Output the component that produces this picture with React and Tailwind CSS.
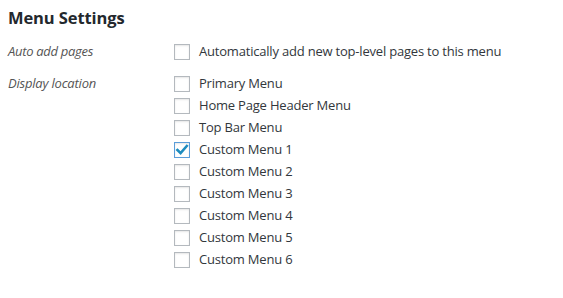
import React from "react";

const locations = [
  { name: "Primary Menu", checked: false },
  { name: "Home Page Header Menu", checked: false },
  { name: "Top Bar Menu", checked: false },
  { name: "Custom Menu 1", checked: true },
  { name: "Custom Menu 2", checked: false },
  { name: "Custom Menu 3", checked: false },
  { name: "Custom Menu 4", checked: false },
  { name: "Custom Menu 5", checked: false },
  { name: "Custom Menu 6", checked: false },
];

function Box({ checked }) {
  return (
    <span
      className={
        "w-4 h-4 shrink-0 border bg-white shadow-[inset_0_1px_2px_rgba(0,0,0,0.1)] flex items-center justify-center " +
        (checked ? "border-[#5b9dd9]" : "border-[#b4b9be]")
      }
    >
      {checked && (
        <svg width="14" height="14" viewBox="0 0 14 14">
          <path d="M2.4 7 L5.6 10.2 L11.8 3" fill="none" stroke="#1e8cbe" strokeWidth="2.6" strokeLinecap="square" />
        </svg>
      )}
    </span>
  );
}

function Option({ label, checked }) {
  return (
    <label className="h-[22px] flex items-center gap-[9px]">
      <Box checked={checked} />
      <span>{label}</span>
    </label>
  );
}

export default function App() {
  return (
    <div className="w-[563px] h-[298px] bg-white text-[#32373c] text-[13px] tracking-[-0.2px] font-['Open_Sans',sans-serif] px-2 pt-[7px]">
      <h3 className="text-[16.5px] font-bold text-[#23282d] leading-[22px] tracking-[-0.1px]">Menu Settings</h3>
      <div className="grid grid-cols-[166px_1fr] mt-[12px]">
        <div className="italic text-[#555] h-[22px] flex items-center tracking-[-0.3px]">Auto add pages</div>
        <Option label="Automatically add new top-level pages to this menu" />
        <div className="italic text-[#555] h-[22px] flex items-center mt-[10px]">Display location</div>
        <div className="mt-[10px]">
          {locations.map((l) => (
            <Option key={l.name} label={l.name} checked={l.checked} />
          ))}
        </div>
      </div>
    </div>
  );
}
